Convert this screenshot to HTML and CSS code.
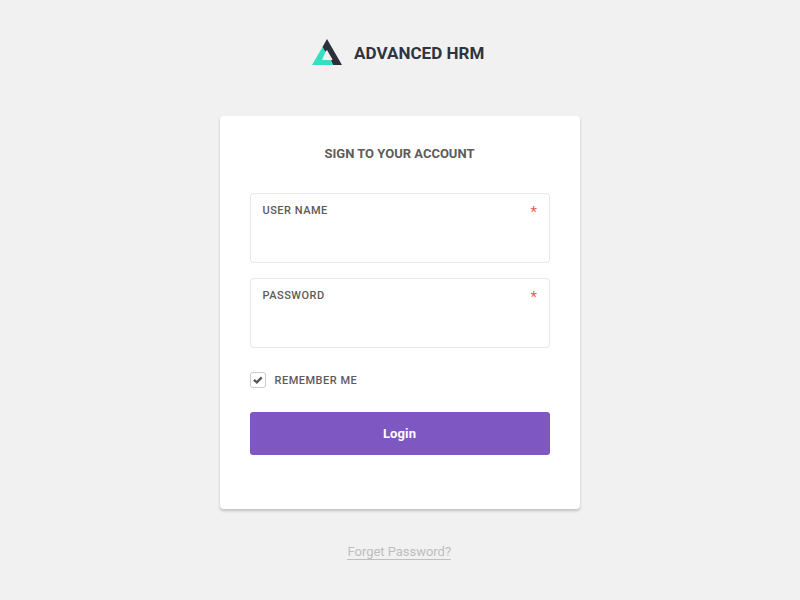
FILE: index.html
```html
<!DOCTYPE html>
<html lang="en">
<head>
	<meta charset="utf-8">
	<meta name="viewport" content="width=device-width, initial-scale=1.0">
	<title>Advanced HRM</title>
	<link rel="stylesheet" href="styles.css">
</head>
<body>
	<header class="brand">
		<svg class="brand-logo" width="30" height="26" viewBox="0 0 30 26">
			<path fill="#2b303b" d="M15 0 30 26H21L19 21.500 20.500 20.500 15 11 13 13 10.500 8z"/>
			<path fill="#36dfc0" d="M10.500 8 13.500 13 10 21H18.500L21 26H0z"/>
		</svg>
		<span class="brand-name">ADVANCED HRM</span>
	</header>
	<form class="login-box">
		<h1 class="login-title">SIGN TO YOUR ACCOUNT</h1>
		<label class="field">
			<span class="field-label">USER NAME</span><span class="required">*</span>
			<input class="field-input" type="text" name="username">
		</label>
		<label class="field">
			<span class="field-label">PASSWORD</span><span class="required">*</span>
			<input class="field-input" type="password" name="password">
		</label>
		<label class="remember">
			<input class="remember-input" type="checkbox" checked>
			<span class="check">
				<svg width="10" height="8" viewBox="0 0 10 8"><path d="M1 3.800 3.800 6.300 8.700 1.400" fill="none" stroke="#555" stroke-width="2.300"/></svg>
			</span>
			<span class="remember-label">REMEMBER ME</span>
		</label>
		<button class="login-btn" type="button">Login</button>
	</form>
	<footer class="foot"><a class="forgot" href="#">Forget Password?</a></footer>
</body>
</html>
```

FILE: styles.css
```css
body {
	margin: 0;
	background: #f1f1f1;
	font-family: Roboto, sans-serif;
	color: #5b5b5b;
}
.brand {
	display: flex;
	justify-content: center;
	padding-top: 39px;
	height: 77px;
	box-sizing: border-box;
	margin-bottom: 39px;
	padding-right: 3.5px;
}
.brand-logo {
	margin-right: 12px;
}
.brand-name {
	font-size: 17px;
	line-height: 28px;
	font-weight: 700;
	letter-spacing: .04px;
	color: #2f3440;
}
.login-box {
	box-sizing: border-box;
	width: 360px;
	height: 393px;
	margin: 0 auto;
	padding: 28px 30px 0;
	background: #fff;
	border-radius: 4px;
	box-shadow: 0 2px 3px rgba(0, 0, 0, .2);
}
.login-title {
	margin: 0 1px 29px 0;
	font-size: 13px;
	line-height: 20px;
	font-weight: 700;
	text-align: center;
}
.field {
	display: flex;
	flex-wrap: wrap;
	justify-content: space-between;
	box-sizing: border-box;
	height: 70px;
	margin-bottom: 15px;
	padding: 6px 12px 6px 11.5px;
	border: 1px solid #e6e6ec;
	border-radius: 4px;
}
.field-label, .remember {
	font-size: 11px;
	line-height: 22px;
	font-weight: 500;
	letter-spacing: .5px;
}
.required {
	font-size: 15px;
	line-height: 24px;
	color: #f55753;
}
.field-input {
	width: 100%;
	height: 26px;
	padding: 0;
	border: 0;
	outline: 0;
	background: none;
}
.remember {
	display: flex;
	align-items: center;
	margin: 21px 0;
}
.remember-input {
	display: none;
}
.remember-label {
	padding-top: 1px;
	margin-bottom: -1px;
}
.check {
	display: flex;
	align-items: center;
	justify-content: center;
	box-sizing: border-box;
	width: 16px;
	height: 16px;
	margin-right: 8.5px;
	border: 1px solid #ccc;
	border-radius: 3px;
}
.login-btn {
	display: block;
	width: 100%;
	height: 43px;
	padding: 1px 7px 1px 6px;
	border: 0;
	border-radius: 3px;
	background: #7e57c2;
	color: #fff;
	font: 700 13px Roboto, sans-serif;
	letter-spacing: .13px;
}
.foot {
	margin: 35px 1.5px 0 0;
	text-align: center;
	font-size: 13px;
}
.forgot {
	display: inline-block;
	border-bottom: 1px solid #c0c0c0;
	color: #bebebe;
	letter-spacing: -.03px;
	text-decoration: none;
}
```
